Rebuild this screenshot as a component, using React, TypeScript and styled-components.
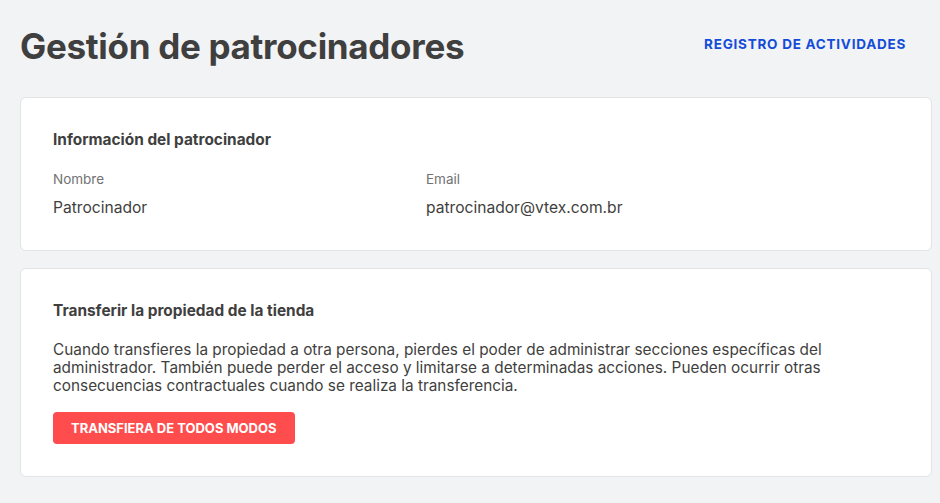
import React from 'react';
import styled, { createGlobalStyle } from 'styled-components';

const GlobalStyle = createGlobalStyle`
  html, body {
    margin: 0;
    padding: 0;
    background: #f2f3f5;
  }
  body {
    font-family: Inter, 'Noto Sans', sans-serif;
    color: #3f3f40;
  }
`;

const Page = styled.div`
  padding: 20px 8px 26px 20px;
  display: flex;
  flex-direction: column;
  gap: 17px;
`;

const Header = styled.div`
  display: flex;
  align-items: center;
  justify-content: space-between;
  height: 52px;
  margin-bottom: 8px;
`;

const Title = styled.h1`
  margin: 0;
  font-size: 35px;
  font-weight: 700;
  letter-spacing: -0.3px;
  color: #3f3f40;
`;

const HeaderLink = styled.a`
  font-size: 13.5px;
  font-weight: 700;
  letter-spacing: 0.75px;
  color: #134cd8;
  text-transform: uppercase;
  text-decoration: none;
  margin-right: 26px;
  margin-top: -4px;
  cursor: pointer;
`;

const Card = styled.section`
  background: #fff;
  border: 1px solid #e3e4e6;
  border-radius: 6px;
  padding: 32px;
`;

const CardTitle = styled.h2`
  margin: 0 0 20px;
  font-size: 15.4px;
  font-weight: 700;
  line-height: 20px;
  color: #3f3f40;
`;

const Fields = styled.div`
  display: grid;
  grid-template-columns: 373px 1fr;
`;

const Field = styled.div`
  display: flex;
  flex-direction: column;
  gap: 10px;
`;

const Label = styled.span`
  font-size: 13.5px;
  line-height: 18px;
  color: #727273;
`;

const Value = styled.span`
  font-size: 15.6px;
  line-height: 20px;
  color: #3f3f40;
`;

const Paragraph = styled.p`
  margin: 0 0 17px;
  max-width: 800px;
  font-size: 15.35px;
  line-height: 18px;
  color: #3f3f40;
`;

const DangerButton = styled.button`
  height: 32px;
  padding: 0 18px;
  border: none;
  border-radius: 4px;
  background: #ff4c4c;
  color: #fff;
  font-family: inherit;
  font-size: 13px;
  font-weight: 700;
  text-transform: uppercase;
  cursor: pointer;
`;

const App: React.FC = () => {
  return (
    <>
      <GlobalStyle />
      <Page>
        <Header>
          <Title>Gestión de patrocinadores</Title>
          <HeaderLink>Registro de actividades</HeaderLink>
        </Header>

        <Card>
          <CardTitle>Información del patrocinador</CardTitle>
          <Fields>
            <Field>
              <Label>Nombre</Label>
              <Value>Patrocinador</Value>
            </Field>
            <Field>
              <Label>Email</Label>
              <Value>patrocinador@vtex.com.br</Value>
            </Field>
          </Fields>
        </Card>

        <Card>
          <CardTitle>Transferir la propiedad de la tienda</CardTitle>
          <Paragraph>
            Cuando transfieres la propiedad a otra persona, pierdes el poder de administrar secciones específicas del
            administrador. También puede perder el acceso y limitarse a determinadas acciones. Pueden ocurrir otras
            consecuencias contractuales cuando se realiza la transferencia.
          </Paragraph>
          <DangerButton>Transfiera de todos modos</DangerButton>
        </Card>
      </Page>
    </>
  );
};

export default App;
